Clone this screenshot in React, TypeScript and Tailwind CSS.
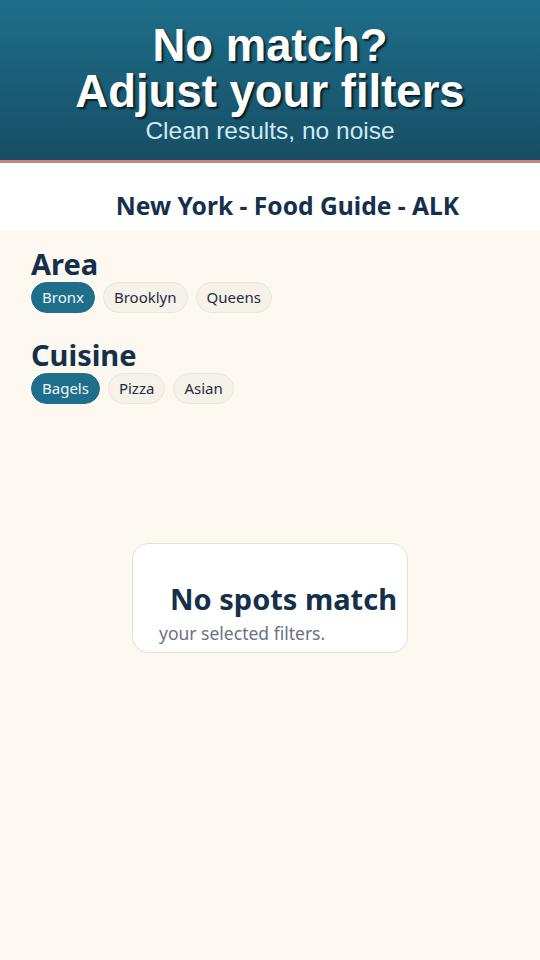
import React from "react";

const Pill = ({ label, active }: { label: string; active?: boolean }) => (
  <span
    className={
      active
        ? "inline-flex h-[31px] items-center rounded-full border border-[#1f6f8b] bg-[#1f6f8b] px-[10px] text-[15px] text-[#eef7fa]"
        : "inline-flex h-[31px] items-center rounded-full border border-[#ece6dc] bg-[#f6f1e9] px-[10px] text-[15px] text-[#1b2e40]"
    }
  >
    {label}
  </span>
);

export default function App() {
  return (
    <div
      className="min-h-[960px] w-[540px] bg-[#fdf8f0]"
      style={{ fontFamily: '"Noto Sans", "Open Sans", sans-serif' }}
    >
      <header
        className="flex h-[163px] flex-col items-center border-b-[3px] border-[#c98479] bg-gradient-to-b from-[#1e6e8a] to-[#164e64] pt-[23px] text-center shadow-[0_1px_3px_rgba(0,0,0,0.15)]"
        style={{ fontFamily: '"Liberation Sans", Arial, sans-serif' }}
      >
        <h1 className="text-[45.5px] font-bold leading-[46px] text-white [text-shadow:2px_2px_2px_rgba(0,0,0,0.7)]">
          <span className="block">No match?</span>
          <span className="block">Adjust your filters</span>
        </h1>
        <p className="mt-[3px] text-[24.5px] leading-[26px] text-[#cdeaf2]">
          Clean results, no noise
        </p>
      </header>
      <div className="flex h-[67px] justify-center bg-white pl-[35px] pt-[28px]">
        <h2 className="text-[24.6px] font-bold leading-[30px] text-[#14304a]">
          New York - Food Guide - ALK
        </h2>
      </div>
      <main className="px-[31px] pt-[15px]">
        <section>
          <h3 className="text-[29px] font-bold leading-[37px] text-[#14304a]">Area</h3>
          <div className="flex gap-[8px]">
            <Pill label="Bronx" active />
            <Pill label="Brooklyn" />
            <Pill label="Queens" />
          </div>
        </section>
        <section className="mt-[23px]">
          <h3 className="text-[29px] font-bold leading-[37px] text-[#14304a]">Cuisine</h3>
          <div className="flex gap-[8px]">
            <Pill label="Bagels" active />
            <Pill label="Pizza" />
            <Pill label="Asian" />
          </div>
        </section>
        <div className="mt-[139px] flex justify-center">
          <div className="h-[110px] w-[276px] rounded-[16px] border border-[#e6e0d5] bg-white pl-[26px] pt-[35px]">
            <div className="pl-[11px] text-[29px] font-bold leading-[40px] text-[#14304a] whitespace-nowrap">
              No spots match
            </div>
            <div className="mt-[3px] text-[17.5px] leading-[22px] text-[#6b7280]">
              your selected filters.
            </div>
          </div>
        </div>
      </main>
    </div>
  );
}
